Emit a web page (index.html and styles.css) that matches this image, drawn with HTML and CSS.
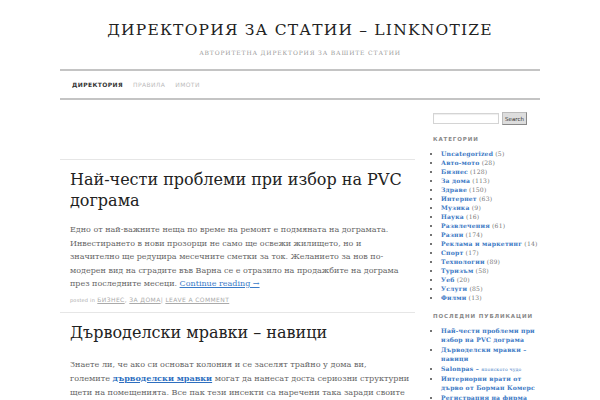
FILE: index.html
```html
<!DOCTYPE html>
<html lang="bg">
<head>
<meta charset="utf-8">
<title>Директория за статии – LinkNotize</title>
<link rel="stylesheet" href="styles.css">
</head>
<body>
<div class="page">
  <header class="site-header">
    <h1 class="site-title">Директория за статии – LinkNotize</h1>
    <p class="site-desc">Авторитетна директория за вашите статии</p>
  </header>
  <nav class="menu">
    <a class="menu-item current" href="#">Директория</a>
    <a class="menu-item" href="#">Правила</a>
    <a class="menu-item" href="#">Имоти</a>
  </nav>
  <div class="layout">
    <main class="content">
      <div class="spacer"></div>
      <article class="post">
        <h2 class="post-title">Най-чести проблеми при избор на PVC дограма</h2>
        <p class="post-text">Едно от най-важните неща по време на ремонт е подмяната на дограмата. Инвестирането в нови прозорци не само ще освежи жилището, но и значително ще редуцира месечните сметки за ток. Желанието за нов по-модерен вид на сградите във Варна се е отразило на продажбите на дограма през последните месеци. <a class="more" href="#">Continue reading →</a></p>
        <p class="post-meta"><span class="meta-label">posted in</span> <a href="#">Бизнес</a>, <a href="#">За дома</a>| <a href="#">Leave a comment</a></p>
      </article>
      <article class="post">
        <h2 class="post-title">Дърводелски мравки – навици</h2>
        <p class="post-text large">Знаете ли, че ако си основат колония и се заселят трайно у дома ви,<br>големите <a class="strong-link" href="#">дърводелски мравки</a> могат да нанесат доста сериозни структурни щети на помещенията. Все пак тези инсекти са наречени така заради своите умения да изграждат своите домове в дървото. Причинят на малки болки и</p>
      </article>
    </main>
    <aside class="sidebar">
      <form class="search">
        <input class="search-input" type="text">
        <button class="search-btn" type="button">Search</button>
      </form>
      <h3 class="widget-title">Категории</h3>
      <ul class="widget-list">
        <li><a href="#">Uncategorized</a> (5)</li>
        <li><a href="#">Авто-мото</a> (28)</li>
        <li><a href="#">Бизнес</a> (128)</li>
        <li><a href="#">За дома</a> (113)</li>
        <li><a href="#">Здраве</a> (150)</li>
        <li><a href="#">Интернет</a> (63)</li>
        <li><a href="#">Музика</a> (9)</li>
        <li><a href="#">Наука</a> (16)</li>
        <li><a href="#">Развлечения</a> (61)</li>
        <li><a href="#">Разни</a> (174)</li>
        <li><a href="#">Реклама и маркетинг</a> (14)</li>
        <li><a href="#">Спорт</a> (17)</li>
        <li><a href="#">Технологии</a> (89)</li>
        <li><a href="#">Туризъм</a> (58)</li>
        <li><a href="#">Уеб</a> (20)</li>
        <li><a href="#">Услуги</a> (85)</li>
        <li><a href="#">Филми</a> (13)</li>
      </ul>
      <h3 class="widget-title">Последни публикации</h3>
      <ul class="widget-list recent">
        <li><a href="#">Най-чести проблеми при избор на PVC дограма</a></li>
        <li><a href="#">Дърводелски мравки – навици</a></li>
        <li><a href="#">Salonpas – <span class="small">японското чудо</span></a></li>
        <li><a href="#">Интериорни врати от дърво от Борман Комерс</a></li>
        <li><a href="#">Регистрация на фирма</a></li>
      </ul>
    </aside>
  </div>
</div>
</body>
</html>
```
FILE: styles.css
```css
html, body {
  margin: 0;
  padding: 0;
  background: #fff;
}
body {
  font-family: "DejaVu Serif", "Liberation Serif", serif;
  color: #333;
  overflow: hidden;
}
.page {
  width: 480px;
  margin: 0 auto;
}
.site-header {
  text-align: center;
  padding-top: 19px;
}
.site-title {
  margin: 0;
  font-size: 15.5px;
  line-height: 22px;
  font-weight: normal;
  text-transform: uppercase;
  letter-spacing: 1.2px;
  color: #222;
}
.site-desc {
  margin: 7px 0 0;
  font-size: 6px;
  line-height: 10px;
  text-transform: uppercase;
  letter-spacing: 0.85px;
  color: #999;
}
.menu {
  margin-top: 11px;
  border-top: 2px solid #c4c4c4;
  border-bottom: 2px solid #c4c4c4;
  height: 27px;
  display: flex;
  align-items: center;
  gap: 10px;
  padding-left: 12px;
}
.menu-item {
  font-family: "DejaVu Sans", sans-serif;
  font-size: 6px;
  text-transform: uppercase;
  letter-spacing: 0.4px;
  text-decoration: none;
  color: #bbb;
}
.menu-item.current {
  color: #333;
  font-weight: bold;
}
.layout {
  display: flex;
  gap: 17px;
}
.content {
  width: 355px;
  flex: none;
}
.spacer {
  height: 59px;
}
.post {
  border-top: 1px solid #e6e6e6;
  padding: 9px 6px 7px 10px;
}
.post-title {
  margin: 0;
  font-size: 16px;
  line-height: 21px;
  font-weight: normal;
  color: #222;
}
.post-text {
  margin: 12px 0 0;
  font-size: 8px;
  line-height: 13.5px;
  color: #666;
}
.post-text.large {
  margin-top: 14px;
  margin-right: -2px;
  font-size: 8.1px;
  line-height: 14px;
}
.post-text a.more {
  color: #3a7bc8;
}
.post-text a.strong-link {
  color: #2e6fc0;
  font-weight: bold;
}
.post-meta {
  margin: 4px 0 0;
  font-family: "DejaVu Sans", sans-serif;
  font-size: 6px;
  line-height: 10px;
  color: #aaa;
  text-transform: uppercase;
  letter-spacing: 0.4px;
}
.post-meta a {
  color: #aaa;
}
.meta-label {
  text-transform: none;
  font-size: 5px;
  letter-spacing: 0.2px;
}
.sidebar {
  width: 108px;
  flex: none;
  padding-top: 12px;
}
.search {
  display: flex;
  align-items: center;
  gap: 3px;
  margin: 0 0 0 1px;
}
.search-input {
  width: 66px;
  height: 11px;
  box-sizing: border-box;
  border: 1px solid #d4d4d4;
  box-shadow: inset 0 1px 1px #eee;
  padding: 0;
  margin: 0;
}
.search-btn {
  width: 25px;
  height: 13px;
  box-sizing: border-box;
  padding: 0;
  margin: 0;
  font-family: "DejaVu Sans", sans-serif;
  font-size: 5.5px;
  color: #333;
  background: #ddd;
  border: 1px solid #bbb;
  border-right-color: #888;
  border-bottom-color: #888;
}
.widget-title {
  margin: 9px 0 0 1px;
  font-family: "DejaVu Sans", sans-serif;
  font-size: 5.5px;
  line-height: 10px;
  font-weight: bold;
  text-transform: uppercase;
  letter-spacing: 0.9px;
  color: #888;
}
.widget-list {
  margin: 5px 0 0;
  padding: 0 0 0 9px;
  font-size: 6.1px;
  line-height: 9px;
  color: #777;
  letter-spacing: 0.2px;
}
.widget-list li {
  list-style: disc;
}
.widget-list li::marker {
  color: #444;
  font-size: 6px;
}
.widget-list a {
  color: #3b78c4;
  font-weight: bold;
  text-decoration: none;
}
.widget-list.recent {
  line-height: 9.4px;
}
.widget-list + .widget-title {
  margin-top: 9px;
}
.small {
  font-size: 4.5px;
  font-weight: normal;
  letter-spacing: 0.2px;
}
```
